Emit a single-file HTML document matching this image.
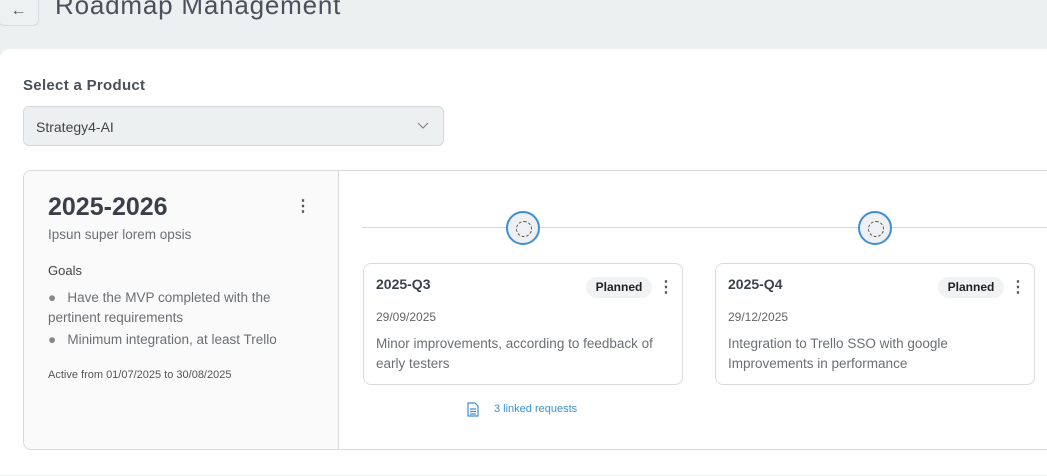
<!DOCTYPE html>
<html><head><style>
*{box-sizing:border-box;margin:0;padding:0}
body{width:1047px;height:476px;overflow:hidden;background:#edf0f1;font-family:"Liberation Sans",sans-serif;position:relative;color:#3d4450}
.abs{position:absolute}
.back{left:-2px;top:-12px;width:41px;height:38px;border:1px solid #d6dadd;border-radius:6px;background:#eef1f2;font-size:16px;color:#555;text-align:center;line-height:36px;padding-top:4px}
.title{left:55px;top:-10px;font-size:26px;color:#4a505c;letter-spacing:0.8px}
.main{left:0;top:49px;width:1060px;height:426px;background:#fff;border-radius:10px 0 0 0}
.lbl{left:23px;top:77px;font-size:15px;font-weight:bold;color:#4a505a;letter-spacing:.3px}
.sel{left:23px;top:106px;width:421px;height:40px;background:#edf0f1;border:1px solid #d4d8db;border-radius:6px;font-size:14px;color:#444;padding:12px 12px}
.box{left:23px;top:170px;width:1040px;height:280px;border:1px solid #d8dadc;border-radius:8px;overflow:hidden}
.left{left:0;top:0;width:315px;height:280px;background:#fafafa;border-right:1px solid #d8dadc}
.card{width:320px;height:122px;border:1px solid #d9dbdd;border-radius:8px;background:#fff;top:263px}
.q{left:12px;top:12px;font-size:14px;font-weight:bold;color:#3d434c}
.pill{left:222px;top:13px;width:66px;height:21px;border-radius:11px;background:#f1f2f3;font-size:12px;font-weight:bold;color:#222;text-align:center;line-height:21px}
.dots{font-size:16px;font-weight:bold;color:#555;line-height:16px}
.date{left:12px;top:46px;font-size:12px;color:#666}
.desc{left:12px;top:70px;font-size:13.5px;color:#6b6f74;line-height:20px}
.node{width:34px;height:34px;border-radius:50%;border:2px solid #3d8fd6;background:#eef0f1;top:211px}
.node:after{content:"";position:absolute;left:8px;top:8px;width:14px;height:14px;border-radius:50%;border:1px dashed #555}
</style></head><body>
<div class="abs back">←</div>
<div class="abs title">Roadmap Management</div>
<div class="abs main"></div>
<div class="abs lbl">Select a Product</div>
<div class="abs sel">Strategy4-AI<svg class="abs" style="left:393px;top:15px" width="12" height="8"><path d="M1 1l5 5 5-5" stroke="#888" fill="none" stroke-width="1.2"/></svg></div>
<div class="abs box">
 <div class="abs left">
  <div class="abs" style="left:24px;top:22px;font-size:25px;font-weight:bold;color:#3a3f48">2025-2026</div>
  <div class="abs dots" style="left:271px;top:28px">⋮</div>
  <div class="abs" style="left:24px;top:56px;font-size:13.5px;color:#6b6f74">Ipsun super lorem opsis</div>
  <div class="abs" style="left:24px;top:92px;font-size:13px;color:#444">Goals</div>
  <div class="abs" style="left:24px;top:117px;width:250px;font-size:13.5px;color:#6b6f74;line-height:20px"><span style="color:#888">●</span>&nbsp;&nbsp;&nbsp;Have the MVP completed with the pertinent requirements</div>
  <div class="abs" style="left:24px;top:161px;font-size:13.5px;color:#6b6f74"><span style="color:#888">●</span>&nbsp;&nbsp;&nbsp;Minimum integration, at least Trello</div>
  <div class="abs" style="left:24px;top:198px;font-size:11px;color:#555">Active from 01/07/2025 to 30/08/2025</div>
 </div>
</div>
<div class="abs" style="left:362px;top:227px;width:700px;height:1px;background:#d6d8da"></div>
<div class="abs node" style="left:506px"></div>
<div class="abs node" style="left:858px"></div>
<div class="abs card" style="left:363px">
 <div class="abs q">2025-Q3</div><div class="abs pill">Planned</div><div class="abs dots" style="left:294px;top:16px">⋮</div>
 <div class="abs date">29/09/2025</div>
 <div class="abs desc">Minor improvements, according to feedback of<br>early testers</div>
</div>
<div class="abs card" style="left:715px">
 <div class="abs q">2025-Q4</div><div class="abs pill">Planned</div><div class="abs dots" style="left:294px;top:16px">⋮</div>
 <div class="abs date">29/12/2025</div>
 <div class="abs desc">Integration to Trello SSO with google<br>Improvements in performance</div>
</div>
<svg class="abs" style="left:467px;top:402px" width="12" height="15"><path d="M1 1h7l3 3v10H1z M3 7h6 M3 9.5h6 M3 12h6" stroke="#3d8fd6" fill="none" stroke-width="1.2"/></svg>
<div class="abs" style="left:494px;top:403px;font-size:11px;color:#3d8fd6">3 linked requests</div>
</body></html>
